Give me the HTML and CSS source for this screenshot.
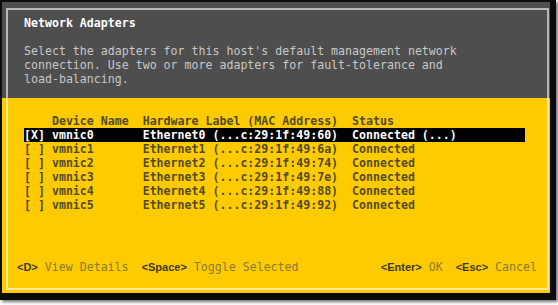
FILE: index.html
```html
<!DOCTYPE html>
<html lang="en">
<head>
    <meta charset="UTF-8">
    <title>Network Adapters</title>
    <link rel="stylesheet" href="styles.css">
</head>
<body>
    <div class="frame">
        <div class="screen">
            <div class="dialog">
                <h1 class="title">Network Adapters</h1>

                <p class="intro">Select the adapters for this host's default management network
connection. Use two or more adapters for fault-tolerance and
load-balancing.</p>

                <div class="adapter-list">
                    <div class="adapter-row header">    Device Name  Hardware Label (MAC Address)  Status</div>
                    <div class="adapter-row selected">[X] vmnic0       Ethernet0 (...c:29:1f:49:60)  Connected (...)</div>
                    <div class="adapter-row">[ ] vmnic1       Ethernet1 (...c:29:1f:49:6a)  Connected</div>
                    <div class="adapter-row">[ ] vmnic2       Ethernet2 (...c:29:1f:49:74)  Connected</div>
                    <div class="adapter-row">[ ] vmnic3       Ethernet3 (...c:29:1f:49:7e)  Connected</div>
                    <div class="adapter-row">[ ] vmnic4       Ethernet4 (...c:29:1f:49:88)  Connected</div>
                    <div class="adapter-row">[ ] vmnic5       Ethernet5 (...c:29:1f:49:92)  Connected</div>
                </div>

                <div class="footer">
                    <div class="footer-group">
                        <span class="key">&lt;D&gt;</span><span class="action">View Details</span>
                        <span class="key">&lt;Space&gt;</span><span class="action">Toggle Selected</span>
                    </div>
                    <div class="footer-group">
                        <span class="key">&lt;Enter&gt;</span><span class="action">OK</span>
                        <span class="key">&lt;Esc&gt;</span><span class="action">Cancel</span>
                    </div>
                </div>
            </div>
        </div>
    </div>
</body>
</html>
```

FILE: styles.css
```css
* {
    margin: 0;
    padding: 0;
    box-sizing: border-box;
}

body {
    width: 558px;
    height: 305px;
    background: #fff;
    overflow: hidden;
    font-family: 'DejaVu Sans Mono', 'Liberation Mono', monospace;
    font-size: 11.6px;
    line-height: 14px;
}

.frame {
    width: 556px;
    height: 300px;
    background: #0b0b0b;
    padding: 2px 6px 7px 2px;
    box-shadow: 2px 2px 3px rgba(0, 0, 0, 0.55);
}

.screen {
    width: 548px;
    height: 291px;
    background: linear-gradient(#4e4e4e 0, #4e4e4e 96px, #fecb00 96px);
    padding: 6px 1px 3px 4px;
}

.dialog {
    height: 100%;
    border: 2px solid rgba(255, 255, 255, 0.6);
    padding: 6px 10px 14px 9px;
    display: flex;
    flex-direction: column;
}

.title {
    font-size: 11.6px;
    font-weight: bold;
    color: #fff;
    margin-left: 7px;
}

.intro {
    margin: 14px 0 0 7px;
    color: #c8c8c8;
    white-space: pre;
}

.adapter-list {
    margin: 28px 0 0 7px;
}

.adapter-row {
    width: 501px;
    white-space: pre;
    font-weight: bold;
    color: #524a26;
}

.adapter-row.selected {
    background: #000;
    color: #fff;
}

.footer {
    margin-top: auto;
    display: flex;
    justify-content: space-between;
}

.footer-group {
    display: flex;
    align-items: baseline;
}

.key {
    font-family: 'Liberation Sans', Arial, sans-serif;
    font-weight: bold;
    font-size: 11px;
    color: #3d3a28;
    margin-right: 7px;
}

.action {
    color: #8a7a36;
    margin-right: 13px;
}

.action:last-child {
    margin-right: 0;
}
```
